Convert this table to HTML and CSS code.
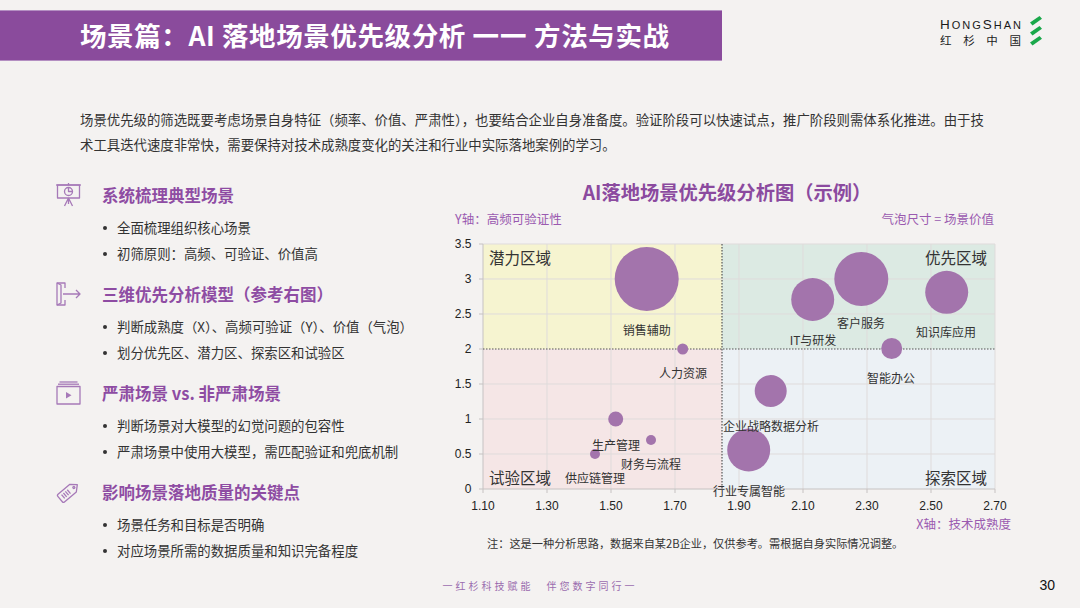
FILE: index.html
```html
<!DOCTYPE html>
<html lang="zh-CN">
<head>
<meta charset="utf-8">
<title>场景篇：AI 落地场景优先级分析</title>
<link rel="stylesheet" href="styles.css">
</head>
<body>
<header class="top">
  <div class="title-bar"><h1>场景篇：AI 落地场景优先级分析 <span class="dash">一一</span> 方法与实战</h1></div>
  <div class="logo">
    <div class="logo-text">
      <span class="logo-en"><span class="big">H</span><span>O</span><span>N</span><span>G</span><span class="big">S</span><span>H</span><span>A</span><span>N</span></span>
      <span class="logo-cn"><span>红</span><span>杉</span><span>中</span><span>国</span></span>
    </div>
    <svg class="logo-mark" width="14" height="31" viewBox="0 0 14 31">
      <polygon points="1,6.5 10.5,0 13,2.8 3.5,9.5" fill="#1aa84b"/>
      <polygon points="1,16.5 10.5,10 13,12.8 3.5,19.5" fill="#1aa84b"/>
      <polygon points="1,26.5 10.5,20 13,22.8 3.5,29.5" fill="#1aa84b"/>
    </svg>
  </div>
</header>

<p class="intro">场景优先级的筛选既要考虑场景自身特征（频率、价值、严肃性），也要结合企业自身准备度。验证阶段可以快速试点，推广阶段则需体系化推进。由于技术工具迭代速度非常快，需要保持对技术成熟度变化的关注和行业中实际落地案例的学习。</p>

<main class="main">
  <section class="points">
    <div class="point">
      <svg class="icon" viewBox="0 0 25 24">
        <line x1="12.5" y1="0" x2="12.5" y2="2"/>
        <line x1="0" y1="2" x2="25" y2="2"/>
        <rect x="1.5" y="2" width="22" height="13"/>
        <circle cx="12.5" cy="8.5" r="4"/>
        <path d="M12.5 4.5 V8.5 H16.5"/>
        <path d="M12.5 15 V21 M12.5 15 L8.5 23 M12.5 15 L16.5 23"/>
      </svg>
      <div class="point-body">
        <h2>系统梳理典型场景</h2>
        <ul>
          <li>全面梳理组织核心场景</li>
          <li>初筛原则：高频、可验证、价值高</li>
        </ul>
      </div>
    </div>
    <div class="point">
      <svg class="icon" viewBox="0 0 25 24">
        <path d="M9 6 V1 H1 V23 H9 V18"/>
        <path d="M1 1 L5 3 V21 L1 23"/>
        <path d="M7 12 H24 M20 8 L24 12 L20 16"/>
      </svg>
      <div class="point-body">
        <h2>三维优先分析模型（参考右图）</h2>
        <ul>
          <li>判断成熟度（X）、高频可验证（Y）、价值（气泡）</li>
          <li>划分优先区、潜力区、探索区和试验区</li>
        </ul>
      </div>
    </div>
    <div class="point">
      <svg class="icon" viewBox="0 0 25 24">
        <line x1="3.5" y1="1" x2="21.5" y2="1"/>
        <line x1="2" y1="3.2" x2="23" y2="3.2"/>
        <rect x="1" y="5.5" width="23" height="17.5"/>
        <polygon class="solid" points="10,11 10,17.5 15.5,14.25"/>
      </svg>
      <div class="point-body">
        <h2>严肃场景 vs. 非严肃场景</h2>
        <ul>
          <li>判断场景对大模型的幻觉问题的包容性</li>
          <li>严肃场景中使用大模型，需匹配验证和兜底机制</li>
        </ul>
      </div>
    </div>
    <div class="point">
      <svg class="icon" viewBox="0 0 25 24">
        <g transform="translate(12.5 12) rotate(-40)">
          <path d="M-11 -3.5 Q-11 -5 -9.5 -5 H6 L11.5 0 L6 5 H-9.5 Q-11 5 -11 3.5 Z"/>
          <circle cx="7" cy="0" r="1"/>
          <path d="M-7 -2.5 V2.5 M-4.5 -2.5 V2.5 M-2 -2.5 V2.5 M0.5 -2.5 V2.5"/>
        </g>
      </svg>
      <div class="point-body">
        <h2>影响场景落地质量的关键点</h2>
        <ul>
          <li>场景任务和目标是否明确</li>
          <li>对应场景所需的数据质量和知识完备程度</li>
        </ul>
      </div>
    </div>
  </section>

  <svg class="chart" width="590" height="380" viewBox="440 175 590 380">
    <text class="chart-title" x="727" y="192">AI落地场景优先级分析图（示例）</text>
    <text class="axis-name" x="455" y="218">Y轴：高频可验证性</text>
    <text class="axis-name end" x="994" y="218">气泡尺寸 = 场景价值</text>

    <rect x="483" y="244" width="239" height="105" fill="#f6f4d0"/>
    <rect x="722" y="244" width="273" height="105" fill="#dceae3"/>
    <rect x="483" y="349" width="239" height="140" fill="#f5e6e6"/>
    <rect x="722" y="349" width="273" height="140" fill="#ecf1f5"/>

    <g class="grid">
      <line x1="547" y1="244" x2="547" y2="489"/>
      <line x1="611" y1="244" x2="611" y2="489"/>
      <line x1="675" y1="244" x2="675" y2="489"/>
      <line x1="739" y1="244" x2="739" y2="489"/>
      <line x1="803" y1="244" x2="803" y2="489"/>
      <line x1="867" y1="244" x2="867" y2="489"/>
      <line x1="931" y1="244" x2="931" y2="489"/>
      <line x1="995" y1="244" x2="995" y2="489"/>
      <line x1="483" y1="244" x2="995" y2="244"/>
      <line x1="483" y1="279" x2="995" y2="279"/>
      <line x1="483" y1="314" x2="995" y2="314"/>
      <line x1="483" y1="384" x2="995" y2="384"/>
      <line x1="483" y1="419" x2="995" y2="419"/>
      <line x1="483" y1="454" x2="995" y2="454"/>
    </g>
    <g class="axis">
      <line x1="483" y1="244" x2="483" y2="489"/>
      <line x1="483" y1="489" x2="995" y2="489"/>
      <path d="M479 244 H483 M479 279 H483 M479 314 H483 M479 349 H483 M479 384 H483 M479 419 H483 M479 454 H483 M479 489 H483"/>
      <path d="M483 489 V493 M547 489 V493 M611 489 V493 M675 489 V493 M739 489 V493 M803 489 V493 M867 489 V493 M931 489 V493 M995 489 V493"/>
    </g>
    <g class="divider">
      <line x1="722" y1="244" x2="722" y2="489"/>
      <line x1="483" y1="349" x2="995" y2="349"/>
    </g>

    <g class="ticks-y">
      <text x="471.5" y="244">3.5</text>
      <text x="471.5" y="279">3</text>
      <text x="471.5" y="314">2.5</text>
      <text x="471.5" y="349">2</text>
      <text x="471.5" y="384">1.5</text>
      <text x="471.5" y="419">1</text>
      <text x="471.5" y="454">0.5</text>
      <text x="471.5" y="489">0</text>
    </g>
    <g class="ticks-x">
      <text x="483" y="506">1.10</text>
      <text x="547" y="506">1.30</text>
      <text x="611" y="506">1.50</text>
      <text x="675" y="506">1.70</text>
      <text x="739" y="506">1.90</text>
      <text x="803" y="506">2.10</text>
      <text x="867" y="506">2.30</text>
      <text x="931" y="506">2.50</text>
      <text x="995" y="506">2.70</text>
    </g>

    <g class="zone">
      <text x="489" y="257">潜力区域</text>
      <text class="end" x="987" y="257">优先区域</text>
      <text x="489" y="477">试验区域</text>
      <text class="end" x="987" y="477">探索区域</text>
    </g>

    <g class="bubbles">
      <circle cx="646.7" cy="279" r="32"/>
      <circle cx="682.7" cy="349" r="5.5"/>
      <circle cx="812.7" cy="299.5" r="21.5"/>
      <circle cx="861.3" cy="279" r="27"/>
      <circle cx="946.7" cy="292.3" r="21.5"/>
      <circle cx="891.7" cy="348.5" r="10.5"/>
      <circle cx="770.7" cy="391" r="16"/>
      <circle cx="748.7" cy="450" r="21.5"/>
      <circle cx="615.7" cy="419" r="7.5"/>
      <circle cx="651" cy="440" r="5"/>
      <circle cx="595" cy="454" r="5"/>
    </g>

    <g class="labels">
      <text x="646.7" y="329">销售辅助</text>
      <text x="683" y="372">人力资源</text>
      <text x="813" y="339">IT与研发</text>
      <text x="861" y="322">客户服务</text>
      <text x="946" y="331.5">知识库应用</text>
      <text x="891" y="377.5">智能办公</text>
      <text x="771" y="425">企业战略数据分析</text>
      <text x="749" y="490">行业专属智能</text>
      <text x="616" y="444">生产管理</text>
      <text x="651" y="463">财务与流程</text>
      <text x="595" y="477">供应链管理</text>
    </g>

    <text class="axis-name end" x="1011" y="523">X轴：技术成熟度</text>
    <text class="note" x="487" y="543">注：这是一种分析思路，数据来自某2B企业，仅供参考。需根据自身实际情况调整。</text>
  </svg>
</main>

<footer class="footer">
  <span></span>
  <span class="slogan">一红杉科技赋能　伴您数字同行一</span>
  <span class="page-num">30</span>
</footer>
</body>
</html>
```

FILE: styles.css
```css
html, body {
  margin: 0;
  padding: 0;
}

body {
  width: 1080px;
  height: 608px;
  overflow: hidden;
  background: #f4f2f1;
  font-family: "Noto Sans CJK SC", "Noto Sans", sans-serif;
  color: #333;
}

.top {
  display: flex;
  justify-content: space-between;
  align-items: flex-start;
  padding-top: 10px;
}

.title-bar {
  width: 722px;
  height: 51px;
  box-sizing: border-box;
  background: #8a4b9c;
  border-top: 1px solid #b48fc2;
  border-bottom: 1px solid #b48fc2;
  display: flex;
  align-items: center;
  padding-left: 80px;
}

.title-bar h1 {
  margin: 0;
  color: #fff;
  font-size: 26.5px;
  font-weight: 700;
  letter-spacing: 0.6px;
  line-height: 1;
  white-space: nowrap;
}

.title-bar .dash {
  letter-spacing: 1px;
}

.logo {
  display: flex;
  align-items: center;
  gap: 8px;
  margin: 5px 37px 0 0;
}

.logo-text {
  display: flex;
  flex-direction: column;
  width: 81px;
  padding-top: 3px;
}

.logo-en {
  display: flex;
  justify-content: space-between;
  align-items: baseline;
  font-family: "Liberation Sans", Arial, sans-serif;
  font-size: 11px;
  line-height: 14px;
  color: #1a1a1a;
}

.logo-en .big {
  font-size: 13.5px;
}

.logo-cn {
  display: flex;
  justify-content: space-between;
  font-size: 11.5px;
  line-height: 16px;
  color: #1a1a1a;
}

.logo-mark {
  display: block;
}

.intro {
  margin: 46px 0 0 80px;
  width: 916px;
  font-size: 13.4px;
  line-height: 25px;
  color: #333;
}

.main {
  display: flex;
  margin-top: 18px;
}

.points {
  width: 440px;
  box-sizing: border-box;
  padding: 8px 0 0 56px;
}

.point {
  display: grid;
  grid-template-columns: 25px 1fr;
  column-gap: 21px;
}

.point + .point {
  margin-top: 16px;
}

.icon {
  width: 25px;
  height: 24px;
  fill: none;
  stroke: #a679b8;
  stroke-width: 1.3;
  stroke-linejoin: round;
}

.icon .solid {
  fill: #a679b8;
  stroke: none;
}

.point-body h2 {
  margin: 0;
  font-size: 16.5px;
  font-weight: 700;
  line-height: 24px;
  color: #8e4ca3;
}

.point-body ul {
  list-style: none;
  margin: 7px 0 0 0;
  padding: 0;
}

.point-body li {
  display: flex;
  align-items: center;
  font-size: 13.4px;
  line-height: 26px;
  color: #333;
  white-space: nowrap;
}

.point-body li::before {
  content: "";
  width: 4px;
  height: 4px;
  border-radius: 50%;
  background: #333;
  flex: none;
  margin: 1px 10px 0 1px;
}

.chart {
  display: block;
  flex: none;
}

.chart text {
  font-family: "Noto Sans CJK SC", "Noto Sans", sans-serif;
  fill: #333;
  dominant-baseline: central;
}

.chart .chart-title {
  font-size: 19.3px;
  font-weight: 700;
  fill: #8b4a9f;
  text-anchor: middle;
}

.chart .axis-name {
  font-size: 12.5px;
  fill: #9a5ab0;
}

.chart .end {
  text-anchor: end;
}

.grid line {
  stroke: #dfdbdb;
  stroke-width: 1;
}

.axis line,
.axis path {
  stroke: #c6c2c2;
  stroke-width: 1;
  fill: none;
}

.divider line {
  stroke: #555;
  stroke-width: 1.2;
  stroke-dasharray: 1.5 1.5;
}

.chart .ticks-y text,
.chart .ticks-x text {
  font-family: "Liberation Sans", Arial, sans-serif;
  font-size: 12px;
  fill: #222;
}

.chart .ticks-y text {
  text-anchor: end;
}

.chart .ticks-x text {
  text-anchor: middle;
}

.chart .zone text {
  font-size: 15.5px;
  fill: #333;
}

.bubbles circle {
  fill: #a374ac;
}

.chart .labels text {
  font-size: 12px;
  fill: #333;
  text-anchor: middle;
}

.chart .note {
  font-size: 11.2px;
  fill: #333;
}

.footer {
  display: grid;
  grid-template-columns: 1fr auto 1fr;
  align-items: center;
  margin-top: 12px;
  height: 20px;
}

.slogan {
  font-size: 10px;
  letter-spacing: 3px;
  color: #9a6cae;
}

.page-num {
  justify-self: end;
  padding-right: 25px;
  font-family: "Liberation Sans", Arial, sans-serif;
  font-size: 14px;
  color: #111;
}
```
